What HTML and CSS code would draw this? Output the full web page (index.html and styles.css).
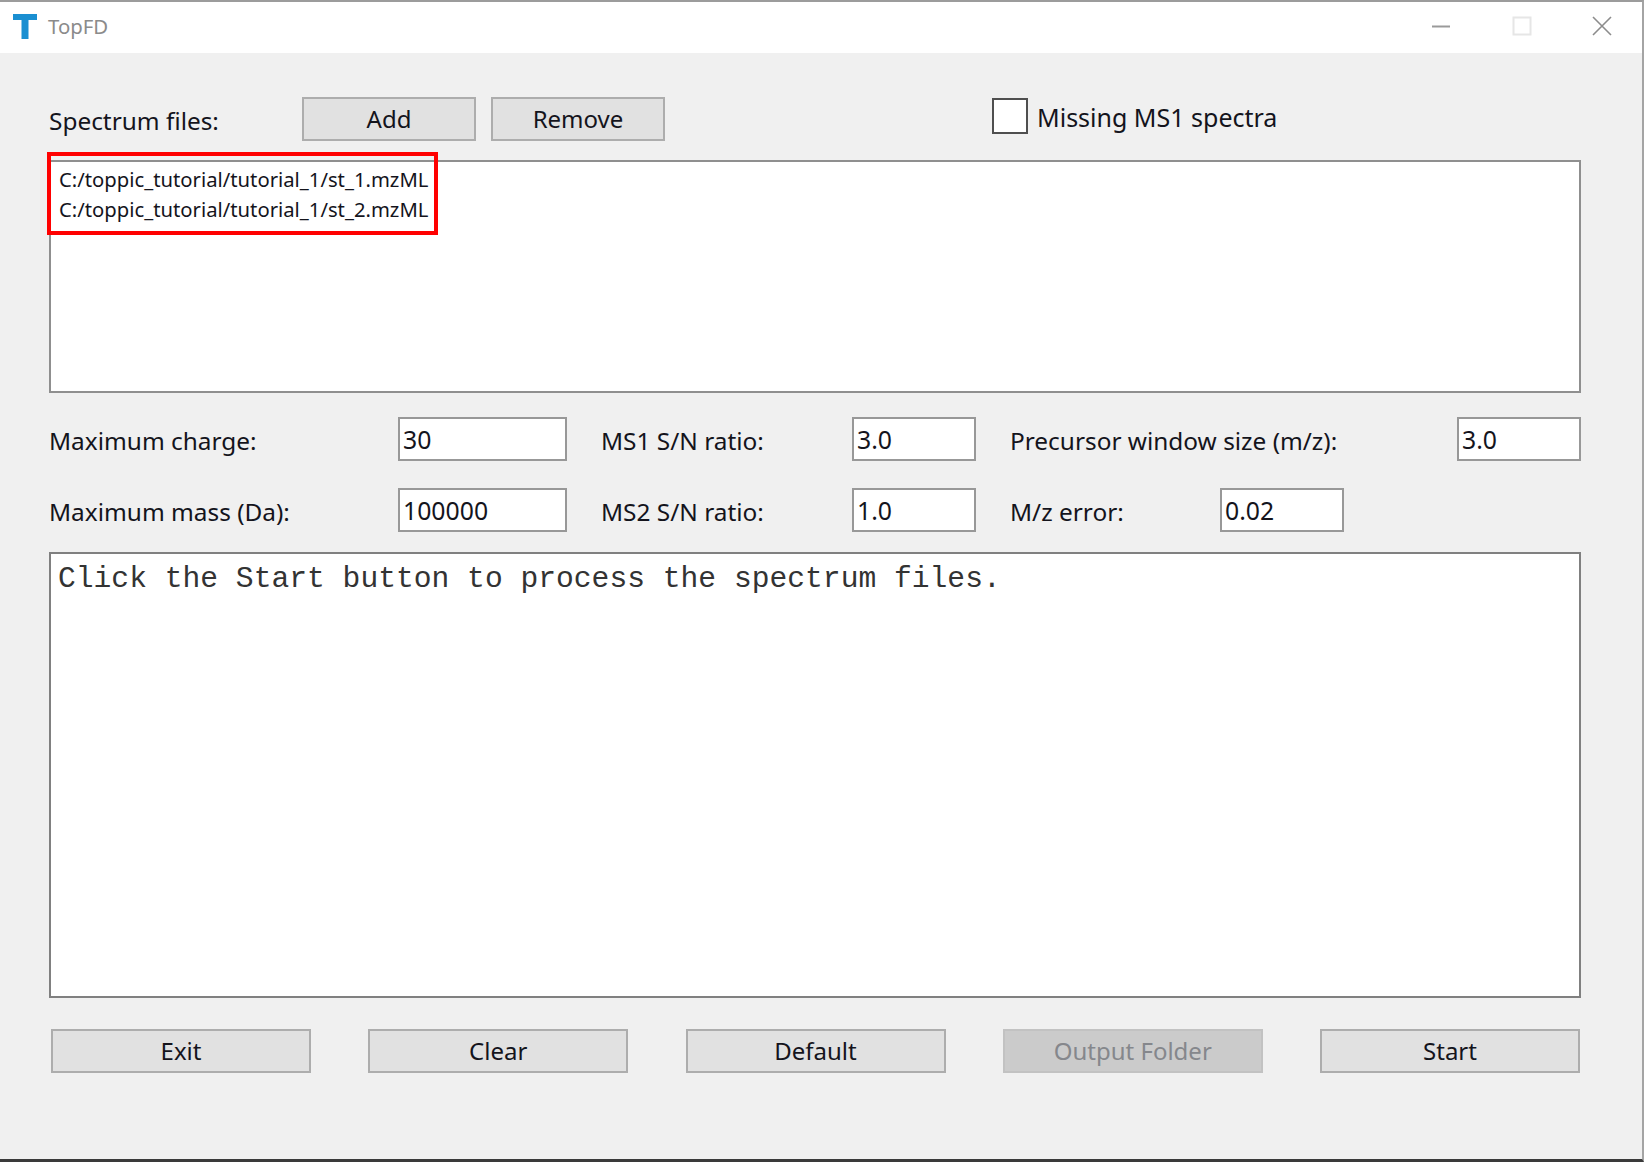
FILE: index.html
```html
<!DOCTYPE html>
<html lang="en">
<head>
<meta charset="utf-8">
<title>TopFD</title>
<link rel="stylesheet" href="styles.css">
</head>
<body>
<div class="window">
  <header class="titlebar">
    <svg class="logo" viewBox="0 0 24 25" width="24" height="25" aria-hidden="true"><path d="M0 0H24V6H15.5V25H8.5V6H0Z" fill="#1a8fd1"/></svg>
    <span class="title">TopFD</span>
    <div class="controls">
      <svg class="ctl" viewBox="0 0 20 20" width="20" height="20" aria-hidden="true"><path d="M1 10.5H19" stroke="#9a9a9a" stroke-width="2" fill="none"/></svg>
      <svg class="ctl" viewBox="0 0 20 20" width="20" height="20" aria-hidden="true"><rect x="1.5" y="1.5" width="17" height="17" stroke="#e6e6e6" stroke-width="2" fill="none"/></svg>
      <svg class="ctl" viewBox="0 0 20 20" width="20" height="20" aria-hidden="true"><path d="M1 1L19 19M19 1L1 19" stroke="#8c8c8c" stroke-width="1.6" fill="none"/></svg>
    </div>
  </header>
  <main class="content">
    <div class="top-row">
      <span class="label spectrum">Spectrum files:</span>
      <div class="top-buttons">
        <button class="btn small">Add</button>
        <button class="btn small">Remove</button>
      </div>
      <label class="check"><span class="box"></span><span class="check-text">Missing MS1 spectra</span></label>
    </div>
    <div class="listbox">
      <div class="highlight"></div>
      <div class="file">C:/toppic_tutorial/tutorial_1/st_1.mzML</div>
      <div class="file">C:/toppic_tutorial/tutorial_1/st_2.mzML</div>
    </div>
    <div class="param-row first">
      <span class="label col1">Maximum charge:</span>
      <div class="field wide">30</div>
      <span class="label col2">MS1 S/N ratio:</span>
      <div class="field">3.0</div>
      <span class="label col3">Precursor window size (m/z):</span>
      <div class="field">3.0</div>
    </div>
    <div class="param-row">
      <span class="label col1">Maximum mass (Da):</span>
      <div class="field wide">100000</div>
      <span class="label col2">MS2 S/N ratio:</span>
      <div class="field">1.0</div>
      <span class="label col3b">M/z error:</span>
      <div class="field">0.02</div>
    </div>
    <div class="log">Click the Start button to process the spectrum files.</div>
    <div class="bottom-row">
      <button class="btn big">Exit</button>
      <button class="btn big">Clear</button>
      <button class="btn big">Default</button>
      <button class="btn big disabled">Output Folder</button>
      <button class="btn big">Start</button>
    </div>
  </main>
</div>
</body>
</html>
```
FILE: styles.css
```css
* { box-sizing: border-box; }
html, body { margin: 0; padding: 0; }
body {
  width: 1644px;
  height: 1162px;
  overflow: hidden;
  font-family: "Noto Sans", "Open Sans", sans-serif;
  color: #14141c;
}
.window {
  width: 1644px;
  height: 1162px;
  display: flex;
  flex-direction: column;
  border-top: 2px solid #9c9c9c;
  border-right: 2px solid #a4a4a4;
  border-bottom: 3px solid #3a3a3a;
  background: #f0f0f0;
}
.titlebar {
  height: 51px;
  flex: none;
  background: #fff;
  display: flex;
  align-items: center;
  padding-left: 13px;
}
.logo { flex: none; margin-top: -2px; }
.title {
  margin-left: 11px;
  margin-top: -4px;
  font-size: 20.4px;
  color: #8b8b8b;
}
.controls {
  margin-left: auto;
  display: flex;
  gap: 60.5px;
  padding-right: 30px;
  margin-top: -3px;
}
.content {
  flex: 1;
  padding: 44px 61px 0 49px;
}
.top-row {
  height: 44px;
  display: flex;
  align-items: center;
}
.label {
  font-size: 24.4px;
  line-height: 32px;
  white-space: nowrap;
}
.spectrum { width: 253px; flex: none; padding-top: 4px; }
.top-buttons { display: flex; gap: 15px; }
.btn {
  font-family: inherit;
  font-size: 24px;
  line-height: 1;
  color: #14141c;
  background: #e1e1e1;
  border: 2px solid #adadad;
  padding: 0;
}
.btn.small { width: 174px; height: 44px; }
.btn.big { width: 260px; height: 44px; }
.btn.disabled { background: #cbcbcb; border-color: #c2c2c2; color: #85878c; }
.check {
  display: flex;
  align-items: center;
  margin-left: 327px;
}
.box {
  width: 36px;
  height: 36px;
  background: #fff;
  border: 2px solid #4f4f4f;
  margin-top: -6px;
}
.check-text {
  font-size: 25px;
  margin-left: 9px;
  margin-top: -5px;
  white-space: nowrap;
}
.listbox {
  position: relative;
  width: 1532px;
  height: 233px;
  margin-top: 19px;
  background: #fff;
  border: 2px solid #8f8f8f;
  padding: 2px 8px;
}
.highlight {
  position: absolute;
  left: -4px;
  top: -10px;
  width: 391px;
  height: 83px;
  border: 4px solid #ff0000;
  pointer-events: none;
}
.file {
  font-size: 20.25px;
  line-height: 30px;
  white-space: nowrap;
}
.param-row {
  display: flex;
  align-items: center;
  height: 44px;
  margin-top: 27px;
}
.param-row.first { margin-top: 24px; }
.param-row .label { padding-top: 3px; }
.col1 { width: 349px; flex: none; }
.col2 { width: 251px; flex: none; margin-left: 34px; }
.col3 { width: 447px; flex: none; margin-left: 34px; }
.col3b { width: 210px; flex: none; margin-left: 34px; }
.field {
  width: 124px;
  height: 44px;
  flex: none;
  background: #fff;
  border: 2px solid #989898;
  font-size: 24.8px;
  line-height: 40px;
  padding-left: 3px;
}
.field.wide { width: 169px; }
.log {
  width: 1532px;
  height: 446px;
  margin-top: 20px;
  background: #fff;
  border: 2px solid #808080;
  padding: 7px 7px;
  font-family: "Liberation Mono", monospace;
  font-size: 29.65px;
  line-height: 36px;
  color: #333;
  white-space: pre;
}
.bottom-row {
  display: flex;
  gap: 57.25px;
  margin-top: 31px;
  padding-left: 2px;
}
```
